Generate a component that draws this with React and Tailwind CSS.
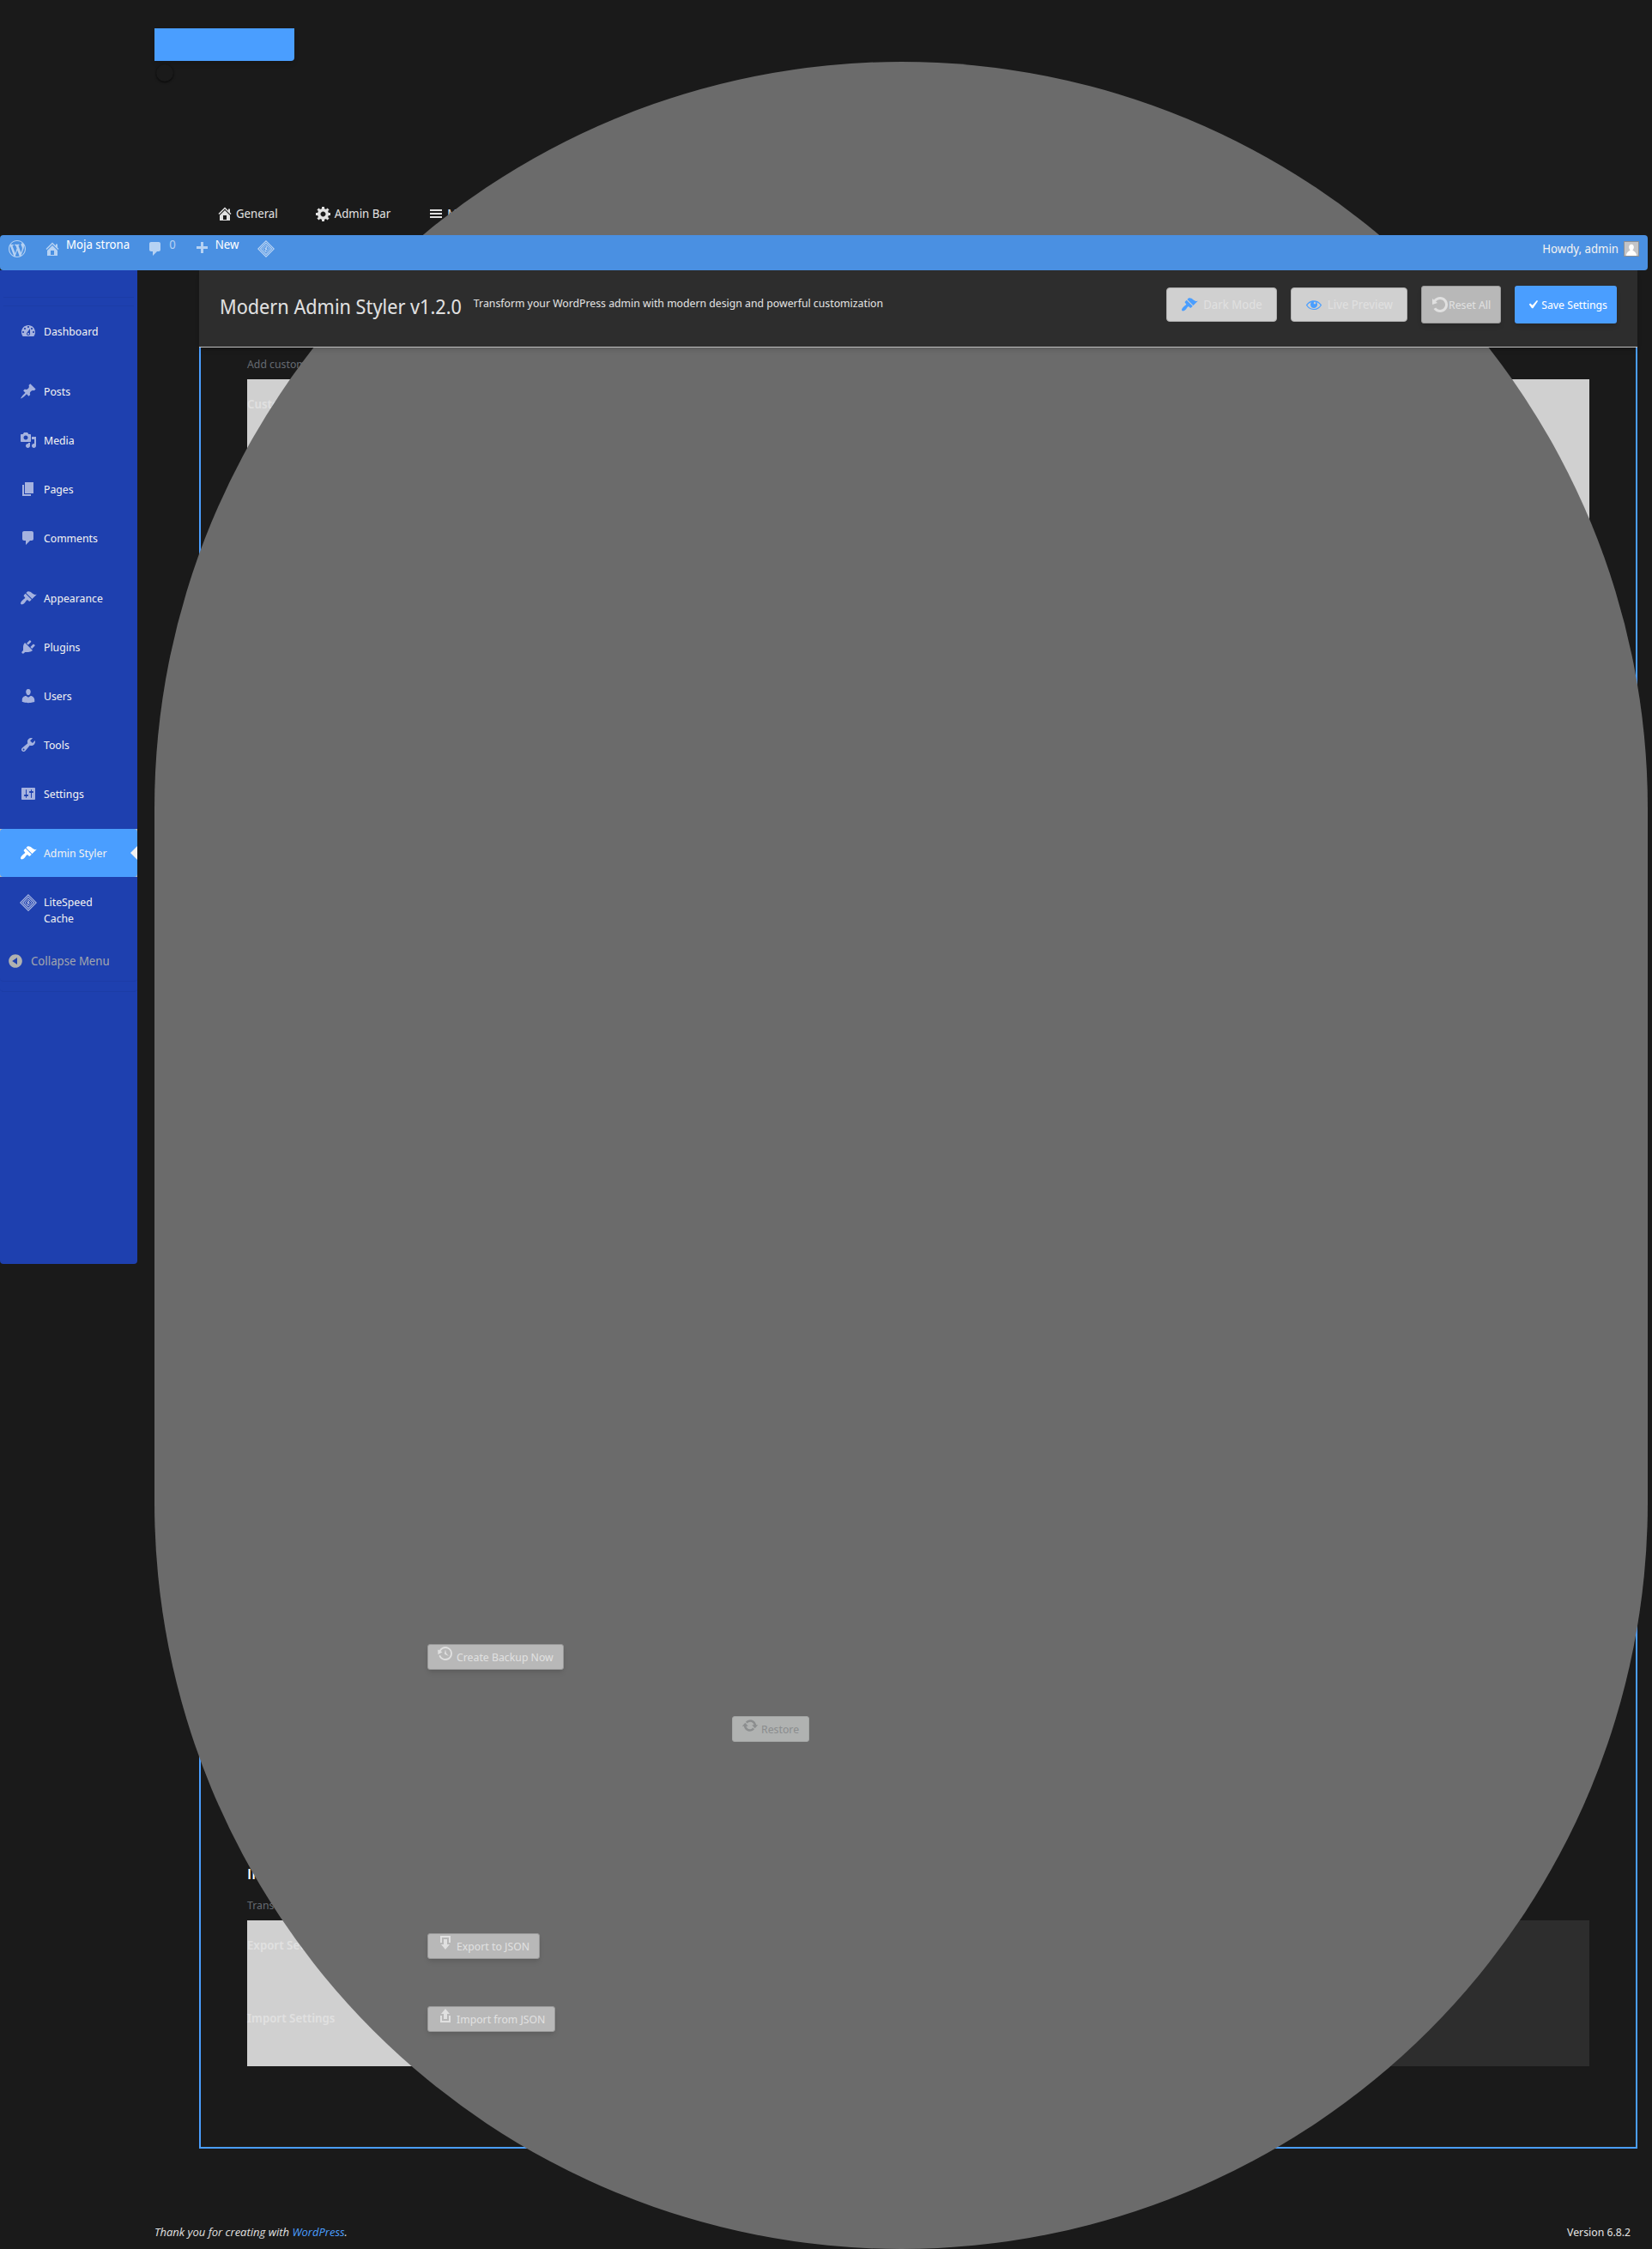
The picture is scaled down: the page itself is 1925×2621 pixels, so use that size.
const ICONS = {
  home: "M16 8.5l1.53 1.53-1.06 1.06L10 4.6l-6.47 6.49-1.06-1.06L10 2.5l4 4v-2h2v4zm-6-2.46l6 5.99V18H4v-5.97zM12 17v-5H8v5h4z",
  gear: "M18 12h-2.18c-.17.7-.44 1.35-.81 1.93l1.54 1.54-2.1 2.1-1.54-1.54c-.58.36-1.23.63-1.91.79V19H8v-2.18c-.68-.16-1.33-.43-1.91-.79l-1.54 1.54-2.12-2.12 1.54-1.54c-.36-.58-.63-1.23-.79-1.91H1V9.03h2.17c.16-.7.44-1.35.8-1.94L2.43 5.55l2.1-2.1 1.54 1.54c.58-.37 1.24-.64 1.93-.81V2h3v2.18c.68.16 1.33.43 1.91.79l1.54-1.54 2.12 2.12-1.54 1.54c.36.59.64 1.24.8 1.94H18V12zm-8.5 1.5c1.66 0 3-1.34 3-3s-1.34-3-3-3-3 1.34-3 3 1.34 3 3 3z",
  menu: "M17 7V5H3v2h14zm0 4V9H3v2h14zm0 4v-2H3v2h14z",
  wordpress: "M20 10c0-5.51-4.49-10-10-10C4.48 0 0 4.49 0 10c0 5.52 4.48 10 10 10 5.51 0 10-4.48 10-10zM7.78 15.37L4.37 6.22c.55-.02 1.17-.08 1.17-.08.5-.06.44-1.13-.06-1.11 0 0-1.45.11-2.37.11-.18 0-.37 0-.58-.01C4.12 2.69 6.87 1.11 10 1.11c2.33 0 4.45.87 6.05 2.34-.68-.11-1.65.39-1.65 1.58 0 .74.45 1.36.9 2.1.35.61.55 1.36.55 2.46 0 1.49-1.4 5-1.4 5l-3.03-8.37c.54-.02.82-.17.82-.17.5-.05.44-1.25-.06-1.22 0 0-1.44.12-2.38.12-.87 0-2.33-.12-2.33-.12-.5-.03-.56 1.2-.06 1.22l.92.08 1.26 3.41zM17.41 10c.24-.64.74-1.87.43-4.25.7 1.29 1.05 2.71 1.05 4.25 0 3.29-1.73 6.24-4.4 7.78.97-2.59 1.94-5.2 2.92-7.78zM6.1 18.09C3.12 16.65 1.11 13.53 1.11 10c0-1.3.23-2.48.72-3.59C3.25 10.3 4.67 14.2 6.1 18.09zm4.03-6.63l2.58 6.98c-.86.29-1.76.45-2.71.45-.79 0-1.57-.11-2.29-.33.81-2.38 1.62-4.74 2.42-7.1z",
  comment: "M5 2h9c1.1 0 2 .9 2 2v7c0 1.1-.9 2-2 2h-2l-5 5v-5H5c-1.1 0-2-.9-2-2V4c0-1.1.9-2 2-2z",
  plus: "M17 7v3h-5v5H9v-5H4V7h5V2h3v5h5z",
  dashboard: "M3.76 16h12.48c1.1-1.37 1.76-3.11 1.76-5 0-4.42-3.58-8-8-8s-8 3.58-8 8c0 1.89.66 3.63 1.76 5zM10 4c.55 0 1 .45 1 1s-.45 1-1 1-1-.45-1-1 .45-1 1-1zM6 6c.55 0 1 .45 1 1s-.45 1-1 1-1-.45-1-1 .45-1 1-1zm8 0c.55 0 1 .45 1 1s-.45 1-1 1-1-.45-1-1 .45-1 1-1zm-5.37 5.55L12 7v6c0 1.1-.9 2-2 2s-2-.9-2-2c0-.57.24-1.08.63-1.45zM4 10c.55 0 1 .45 1 1s-.45 1-1 1-1-.45-1-1 .45-1 1-1zm12 0c.55 0 1 .45 1 1s-.45 1-1 1-1-.45-1-1 .45-1 1-1zm-5 3c0-.55-.45-1-1-1s-1 .45-1 1 .45 1 1 1 1-.45 1-1z",
  pin: "M10.44 3.02l1.82-1.82 6.36 6.35-1.83 1.82c-1.05-.68-2.48-.57-3.41.36l-.75.75c-.92.93-1.04 2.35-.35 3.41l-1.83 1.82-2.41-2.41-2.8 2.79c-.42.42-3.38 2.71-3.8 2.29s1.86-3.39 2.28-3.81l2.79-2.79L4.1 9.36l1.83-1.82c1.05.69 2.48.57 3.4-.36l.75-.75c.93-.92 1.05-2.35.36-3.41z",
  media: "M13 11V4c0-.55-.45-1-1-1h-1.67L9 1H5L3.67 3H2c-.55 0-1 .45-1 1v7c0 .55.45 1 1 1h10c.55 0 1-.45 1-1zM7 4.5c1.38 0 2.5 1.12 2.5 2.5S8.38 9.5 7 9.5 4.5 8.38 4.5 7 5.62 4.5 7 4.5zM14 6h5v10.5c0 1.38-1.12 2.5-2.5 2.5S14 17.88 14 16.5s1.12-2.5 2.5-2.5c.17 0 .34.02.5.05V9h-3V6zm-4 8.05V13h2v3.5c0 1.38-1.12 2.5-2.5 2.5S7 17.88 7 16.5 8.12 14 9.5 14c.17 0 .34.02.5.05z",
  page: "M6 15V2h10v13H6zm-1 1h8v2H3V5h2v11z",
  brush: "M14.48 11.06L7.41 3.99l1.5-1.5c.5-.56 2.3-.47 3.51.32 1.21.8 1.43 1.28 2.91 2.1 1.18.64 2.45 1.26 4.45.85zm-.71.71L6.7 4.7 4.93 6.47c-.39.39-.39 1.02 0 1.41l1.06 1.06c.39.39.39 1.03 0 1.42-.6.6-1.43 1.11-2.21 1.69-.35.26-.7.53-1.01.84C1.43 14.23.4 16.08 1.4 17.07c.99 1 2.84-.03 4.18-1.36.31-.31.58-.66.85-1.02.57-.78 1.08-1.61 1.69-2.21.39-.39 1.02-.39 1.41 0l1.06 1.06c.39.39 1.02.39 1.41 0z",
  plug: "M13.11 4.36L9.87 7.6 8 5.73l3.24-3.24c.35-.34 1.05-.2 1.56.32.52.51.66 1.21.31 1.55zm-8 1.77l.91-1.12 9.01 9.01-1.19.84c-.71.71-2.63 1.16-3.82 1.16H6.14L4.9 17.26c-.59.59-1.54.59-2.12 0-.59-.58-.59-1.53 0-2.12l1.24-1.24v-3.88c0-1.13.4-3.19 1.09-3.89zm7.26 3.97l3.24-3.24c.34-.35 1.04-.21 1.55.31.52.51.66 1.21.31 1.55l-3.24 3.25z",
  user: "M10 9.25c-2.27 0-2.73-3.44-2.73-3.44C7 4.02 7.82 2 9.97 2c2.16 0 2.98 2.02 2.71 3.81 0 0-.41 3.44-2.68 3.44zm0 2.57L12.72 10c2.39 0 4.52 2.33 4.52 4.53v2.49s-3.65 1.13-7.24 1.13c-3.65 0-7.24-1.13-7.24-1.13v-2.49c0-2.25 1.94-4.48 4.47-4.48z",
  wrench: "M16.68 9.77c-1.34 1.34-3.3 1.67-4.95.99l-5.41 6.52c-.99.99-2.59.99-3.58 0s-.99-2.59 0-3.57l6.52-5.42c-.68-1.65-.35-3.61.99-4.95 1.28-1.28 3.12-1.62 4.72-1.06l-2.89 2.89 2.82 2.82 2.86-2.87c.53 1.58.18 3.39-1.08 4.65zM3.81 16.21c.4.39 1.04.39 1.43 0 .4-.4.4-1.04 0-1.43-.39-.4-1.03-.4-1.43 0-.39.39-.39 1.03 0 1.43z",
  sliders: "M18 16V4c0-.55-.45-1-1-1H3c-.55 0-1 .45-1 1v12c0 .55.45 1 1 1h14c.55 0 1-.45 1-1zM8 11h1c.55 0 1 .45 1 1s-.45 1-1 1H8v1.5c0 .28-.22.5-.5.5s-.5-.22-.5-.5V13H6c-.55 0-1-.45-1-1s.45-1 1-1h1V5.5c0-.28.22-.5.5-.5s.5.22.5.5V11zm5-2h-1c-.55 0-1-.45-1-1s.45-1 1-1h1V5.5c0-.28.22-.5.5-.5s.5.22.5.5V7h1c.55 0 1 .45 1 1s-.45 1-1 1h-1v5.5c0 .28-.22.5-.5.5s-.5-.22-.5-.5V9z",
  collapse: "M10 2.16c4.33 0 7.84 3.51 7.84 7.84s-3.51 7.84-7.84 7.84S2.16 14.33 2.16 10 5.71 2.16 10 2.16zm2 11.72V6.12L6.18 9.97z",
  eye: "M18.3 9.5C15 4.9 8.5 3.8 3.9 7.2c-1.2.9-2.2 2.1-3 3.4.2.4.5.8.8 1.2 3.3 4.6 9.6 5.6 14.2 2.4.9-.7 1.7-1.4 2.4-2.4.3-.4.5-.8.8-1.2-.3-.4-.5-.8-.8-1.1zm-8.2-2.3c.5-.5 1.3-.5 1.8 0s.5 1.3 0 1.8-1.3.5-1.8 0-.5-1.3 0-1.8zm-.1 7.7c-3.1 0-6-1.6-7.7-4.2C3.5 9 5.1 7.8 7 7.2c-.7.8-1 1.7-1 2.7 0 2.2 1.7 4.1 4 4.1 2.2 0 4.1-1.7 4.1-4v-.1c0-1-.4-2-1.1-2.7 1.9.6 3.5 1.8 4.7 3.5-1.7 2.6-4.6 4.2-7.7 4.2z",
  rotate: "M10.25 1.02c5.1 0 8.75 4.04 8.75 9s-3.65 9-8.75 9c-3.2 0-6.02-1.59-7.68-3.99l2.59-1.52c1.1 1.5 2.86 2.51 4.84 2.51 3.3 0 6-2.79 6-6s-2.7-6-6-6c-1.97 0-3.72 1-4.82 2.49L7 8.02l-6 2v-7L2.89 4.6c1.69-2.17 4.36-3.58 7.36-3.58z",
  check: "M14.83 4.89l1.34.94-5.81 8.38H9.02L5.78 9.67l1.34-1.25 2.57 2.4z",
  backup: "M13.65 2.88c3.93 2.01 5.48 6.84 3.47 10.77s-6.83 5.48-10.77 3.47c-1.87-.96-3.2-2.56-3.86-4.4l1.64-1.03c.45 1.57 1.52 2.95 3.08 3.76 3.01 1.54 6.69.35 8.23-2.66 1.55-3.01.36-6.69-2.65-8.24C9.78 3.01 6.1 4.2 4.56 7.21l1.88.97-4.95 3.08-.39-5.82 1.78.91C4.9 2.4 9.75.89 13.65 2.88zm-4.36 7.83C9.11 10.53 9 10.28 9 10c0-.07.03-.12.04-.19h-.01L10 5l.97 4.81L14 13l-4.5-2.12.02-.02c-.08-.04-.16-.09-.23-.15z",
  update: "M10.2 3.28c3.53 0 6.43 2.61 6.92 6h2.08l-3.5 4-3.5-4h2.32c-.45-1.97-2.21-3.45-4.32-3.45-1.45 0-2.73.71-3.54 1.78L4.95 5.66C6.23 4.2 8.11 3.28 10.2 3.28zm-.4 13.44c-3.52 0-6.43-2.61-6.92-6H.8l3.5-4c1.17 1.33 2.33 2.67 3.5 4H5.48c.45 1.97 2.21 3.45 4.32 3.45 1.45 0 2.73-.71 3.54-1.78l1.71 1.95c-1.28 1.46-3.15 2.38-5.25 2.38z",
  download: "M14.01 4v6h2V2H4v8h2.01V4h8zm-2 2v6h3l-5 6-5-6h3V6h4z",
  upload: "M8 14V8H5l5-6 5 6h-3v6H8zm-2 2v-6H4v8h12.01v-8H14v6H6z",
};

function Icon({ name, className = "" }) {
  if (name === "litespeed") return <LiteSpeed className={className} />;
  return (
    <svg viewBox="0 0 20 20" fill="currentColor" aria-hidden="true" className={`size-5 shrink-0 ${className}`}>
      <path d={ICONS[name]} />
    </svg>
  );
}

function LiteSpeed({ className = "" }) {
  return (
    <svg viewBox="0 0 20 20" fill="none" stroke="currentColor" aria-hidden="true" className={`size-5 shrink-0 ${className}`}>
      <path strokeWidth="1.200" d="M10 .8L19.200 10 10 19.200.8 10z" />
      <path strokeWidth="1.100" d="M10 3.400l6.600 6.600-6.600 6.600L3.400 10z" />
      <path strokeWidth="1" d="M10 5.900l4.100 4.100-4.100 4.100L5.900 10z" />
      <path fill="currentColor" stroke="none" d="M11.400 6.600l-3.800 3.700h1.800l-.9 3.200 4-3.800h-1.800z" />
    </svg>
  );
}

const TABS = [
  ["home", "General"],
  ["gear", "Admin Bar"],
  ["menu", "Menu"],
];

const MENU_GROUPS = [
  [["dashboard", "Dashboard"]],
  [["pin", "Posts"], ["media", "Media"], ["page", "Pages"], ["comment", "Comments"]],
  [["brush", "Appearance"], ["plug", "Plugins"], ["user", "Users"], ["wrench", "Tools"], ["sliders", "Settings"]],
];

function MenuItem({ icon, label }) {
  return (
    <li>
      <a href="#" className="flex h-[57px] items-center gap-2 pl-[23px] text-[#f0f0f1]">
        <Icon name={icon} className="text-white/60" />
        {label}
      </a>
    </li>
  );
}

function Sidebar() {
  return (
    <nav aria-label="Main menu" className="min-h-[1158px] w-40 shrink-0 self-start rounded-b bg-[#1e40af]">
      <div className="mx-1 h-[42px] border-b border-[#1c3ca6] pt-[31px]">
        <div className="border-t border-[#1c3ca6]" />
      </div>
      <div className="flex flex-col gap-[13px] pb-[13px]">
        {MENU_GROUPS.map((group) => (
          <ul key={group[0][1]}>
            {group.map(([icon, label]) => (
              <MenuItem key={label} icon={icon} label={label} />
            ))}
          </ul>
        ))}
      </div>
      <ul>
        <li className="bg-[#b8b8b8]">
          <a href="#" aria-current="page" className="relative flex h-14 items-center gap-2 rounded bg-[#4a9eff] pl-[23px] text-[#f0f0f1]">
            <Icon name="brush" className="text-white" />
            Admin Styler
            <span className="absolute top-5 right-0 border-y-8 border-r-8 border-y-transparent border-r-[#f0f0f1]" />
          </a>
        </li>
        <li>
          <a href="#" className="flex h-[74px] gap-2 pt-5 pr-10 pl-[23px] leading-[19px] text-[#f0f0f1]">
            <Icon name="litespeed" className="text-white/60" />
            LiteSpeed Cache
          </a>
        </li>
      </ul>
      <button type="button" className="flex h-12 w-full items-center gap-2 rounded-b border-b border-[#1c3ca6] pl-2 text-sm text-[#a0a5ae]">
        <Icon name="collapse" className="text-[#b0b2b0]" />
        Collapse Menu
      </button>
      <div className="h-3 rounded-b border-b border-[#1c3ca6]" />
    </nav>
  );
}

function AdminBar() {
  return (
    <header className="relative z-10 flex h-[41px] items-start justify-between rounded bg-[#4a90e2] pt-1.5 pr-2.5 pl-2.5 text-sm text-[#f0f0f1]">
      <div className="flex items-start text-white">
        <a href="#" aria-label="About WordPress" className="mr-[21px] text-white/60"><Icon name="wordpress" /></a>
        <a href="#" className="mr-5 flex gap-1.5 leading-[10px]"><Icon name="home" className="text-white/60" />Moja strona</a>
        <a href="#" aria-label="0 comments" className="mr-5 flex gap-1.5 leading-[10px] text-white/60"><Icon name="comment" />0</a>
        <a href="#" className="mr-[22px] flex gap-1.5 leading-[10px]"><Icon name="plus" className="text-white/60" />New</a>
        <a href="#" aria-label="LiteSpeed" className="text-white/60"><Icon name="litespeed" /></a>
      </div>
      <a href="#" className="flex items-center gap-1.5">
        Howdy, admin
        <svg viewBox="0 0 18 18" aria-hidden="true" className="size-[18px] border border-[#8c8f94] bg-[#c3c4c7]">
          <path fill="#fff" d="M9 3c2 0 3.200 1.500 3.200 3.700 0 1.600-.7 2.900-1.600 3.600.2 1.600 4.800 1.500 5.200 7.700H2.200c.4-6.200 5-6.100 5.200-7.700-.9-.7-1.600-2-1.600-3.600C5.800 4.500 7 3 9 3z" />
        </svg>
      </a>
    </header>
  );
}

function PageHeader() {
  return (
    <div className="relative z-10 flex items-start border-b border-[#c0c0c0] bg-[#2d2d2d] px-6 pt-[18px] pb-[23px] text-[#e0e0e0] shadow-md">
      <h1 className="mr-3.5 text-[23px] leading-[48px]">Modern Admin Styler v1.2.0</h1>
      <p className="leading-10">Transform your WordPress admin with modern design and powerful customization</p>
      <div className="ml-auto flex items-center gap-4">
        <button type="button" className="flex h-10 items-center gap-1.5 rounded border border-[#b0b0b0] bg-[#d0d0d0] px-4 text-sm">
          <Icon name="brush" className="text-[#4a9eff]" />Dark Mode
        </button>
        <button type="button" className="flex h-10 items-center gap-1.5 rounded border border-[#b0b0b0] bg-[#d0d0d0] px-4 text-sm">
          <Icon name="eye" className="text-[#4a9eff]" />Live Preview
        </button>
        <button type="button" className="flex h-11 items-center rounded-[3px] border border-[#999] bg-[#b8b8b8] px-[11px] shadow-md">
          <Icon name="rotate" />Reset All
        </button>
        <button type="button" className="flex h-11 items-center rounded-[3px] bg-[#4a9eff] px-[11px] text-white shadow-md">
          <Icon name="check" />Save Settings
        </button>
      </div>
    </div>
  );
}

function ActionButton({ icon, children }) {
  return (
    <button type="button" className="relative z-10 flex h-[30px] items-start gap-[3px] rounded-[3px] border border-[#999] bg-[#b8b8b8] pr-[11px] pl-2.5 leading-7 text-[#e0e0e0] shadow-md">
      <Icon name={icon} />{children}
    </button>
  );
}

function SettingsRow({ label, children }) {
  return (
    <tr className="h-[85px] align-top">
      <th scope="row" className="w-[210px] bg-[#d0d0d0] pt-5 text-left text-sm leading-[18px] font-semibold">{label}</th>
      <td className="pt-[15px]">{children}</td>
    </tr>
  );
}

function Settings() {
  return (
    <main className="border-x-2 border-b-2 border-[#4a9eff] px-[54px] pt-[9px] pb-[94px] text-[#e0e0e0]">
      <p className="mb-2 leading-5 text-[#646970]">Add custom CSS</p>
      <section className="min-h-[1400px] bg-[#d0d0d0] pt-5">
        <h3 className="text-sm leading-[18px] font-semibold">Custom CSS</h3>
      </section>
      <table className="mt-[59px] w-full">
        <tbody>
          <tr className="h-[84px] align-top">
            <td className="pt-[15px] pl-[210px]"><ActionButton icon="backup">Create Backup Now</ActionButton></td>
          </tr>
          <tr className="h-[86px] align-top">
            <td className="pt-[15px] pl-[565px]">
              <button type="button" disabled className="relative z-10 flex h-[30px] items-start gap-[3px] rounded-[3px] border border-[#a5a7a6] bg-[#b0b2b1] pr-[11px] pl-2.5 leading-7 text-[#8c8e8f]">
                <Icon name="update" />Restore
              </button>
            </td>
          </tr>
        </tbody>
      </table>
      <h2 className="mt-[101px] mb-3.5 font-['Open_Sans',sans-serif] text-[17px] leading-6 font-semibold text-white">Import</h2>
      <p className="mb-2 leading-5 text-[#646970]">Transfer</p>
      <table className="w-full bg-[#2d2d2d]">
        <tbody>
          <SettingsRow label="Export Settings"><ActionButton icon="download">Export to JSON</ActionButton></SettingsRow>
          <SettingsRow label="Import Settings"><ActionButton icon="upload">Import from JSON</ActionButton></SettingsRow>
        </tbody>
      </table>
    </main>
  );
}

export default function App() {
  return (
    <div className="relative min-h-screen bg-[#1a1a1a] pr-[5px] font-['Noto_Sans_Display','Noto_Sans',sans-serif] text-[13px] leading-5">
      <div className="flex h-[274px] flex-col pt-[33px] pl-[180px]">
        <div className="h-[38px] w-[163px] rounded-br bg-[#4a9eff] shadow-md" />
        <div className="mt-1 ml-0.5 size-5 rounded-full bg-[#1a1a1a] shadow-sm shadow-black/60" />
        <nav aria-label="Settings sections" className="mt-auto mb-[15px] ml-[72px] flex gap-[43px] text-sm text-[#e0e0e0]">
          {TABS.map(([icon, label]) => (
            <a key={label} href="#" className="flex items-center gap-[3px]"><Icon name={icon} />{label}</a>
          ))}
        </nav>
      </div>
      <div className="absolute top-[72px] right-[5px] bottom-0 left-[180px] z-[1] rounded-full bg-[#6b6b6b]" />
      <AdminBar />
      <div className="flex">
        <Sidebar />
        <div className="mr-3 ml-[72px] min-w-0 flex-1">
          <PageHeader />
          <Settings />
        </div>
      </div>
      <footer className="mt-[87px] flex justify-between pr-5 pb-2.5 pl-[180px] text-[#e0e0e0]">
        <p className="font-['Open_Sans',sans-serif] italic">Thank you for creating with <a href="#" className="text-[#4a9eff]">WordPress</a>.</p>
        <p>Version 6.8.2</p>
      </footer>
    </div>
  );
}
